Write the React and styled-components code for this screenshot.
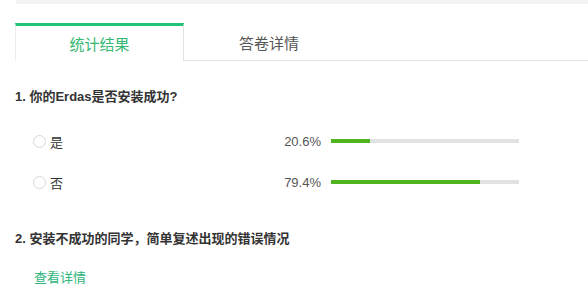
import React from "react";
import styled, { createGlobalStyle } from "styled-components";

const Global = createGlobalStyle`
  body { margin: 0; background: #fff; font-family: "Liberation Sans", "Noto Sans CJK SC", sans-serif; color: #333; }
`;

const Page = styled.div`
  width: 588px; height: 292px; overflow: hidden;
`;

const TopStrip = styled.div`
  margin-left: 16px; height: 4px; background: #f4f4f4;
`;

const Tabs = styled.div`
  display: flex; margin: 19px 0 0 15px; border-bottom: 1px solid #e2e2e2;
`;

const Tab = styled.div`
  box-sizing: border-box;
  height: ${p => (p.$active ? "38px" : "37px")};
  margin-bottom: ${p => (p.$active ? "-1px" : "0")};
  display: flex; align-items: center; justify-content: center;
  padding-bottom: ${p => (p.$active ? "0" : "1px")};
  font-size: 15px;
  width: ${p => (p.$active ? "169px" : "170px")};
  color: ${p => (p.$active ? "#35b872" : "#555")};
  background: ${p => (p.$active ? "#fff" : "transparent")};
  border-top: 3px solid ${p => (p.$active ? "#24c274" : "transparent")};
  border-left: 1px solid ${p => (p.$active ? "#ececec" : "transparent")};
  border-right: 1px solid ${p => (p.$active ? "#e2e2e2" : "transparent")};
`;

const Content = styled.div`
  padding-left: 15px;
`;

const Question = styled.div`
  font-size: 13px; font-weight: bold; line-height: 20px; color: #333;
  margin-top: ${p => p.$top}px;
`;

const Options = styled.div`
  display: flex; flex-direction: column; gap: 21px; margin-top: 24px;
`;

const Row = styled.div`
  display: flex; align-items: center; height: 20px; padding-left: 18px;
`;

const Choice = styled.label`
  width: 288px; display: flex; align-items: center; font-size: 13px; color: #333;
`;

const Radio = styled.span`
  box-sizing: border-box; width: 13px; height: 13px; border-radius: 50%;
  border: 1px solid #d8d8d8; margin-right: 4px; background: #fff;
`;

const Percent = styled.span`
  margin-left: auto; color: #555; font-size: 13px;
`;

const Bar = styled.div`
  margin-left: 10px; width: 188px; height: 4px; background: #e2e2e2;
`;

const Fill = styled.div`
  height: 100%; background: #4fb51c;
`;

const Link = styled.a`
  display: block; margin-top: 19px; margin-left: 19px;
  font-size: 13px; line-height: 20px; color: #2fb57a; text-decoration: none; cursor: pointer;
`;

const options = [
  { label: "是", pct: 20.6 },
  { label: "否", pct: 79.4 },
];

export default function App() {
  return (
    <Page>
      <Global />
      <TopStrip />
      <Tabs>
        <Tab $active>统计结果</Tab>
        <Tab>答卷详情</Tab>
      </Tabs>
      <Content>
        <Question $top={26}>1. 你的Erdas是否安装成功?</Question>
        <Options>
          {options.map(o => (
            <Row key={o.label}>
              <Choice>
                <Radio />
                {o.label}
                <Percent>{o.pct}%</Percent>
              </Choice>
              <Bar>
                <Fill style={{ width: `${o.pct}%` }} />
              </Bar>
            </Row>
          ))}
        </Options>
        <Question $top={37}>2. 安装不成功的同学，简单复述出现的错误情况</Question>
        <Link>查看详情</Link>
      </Content>
    </Page>
  );
}
